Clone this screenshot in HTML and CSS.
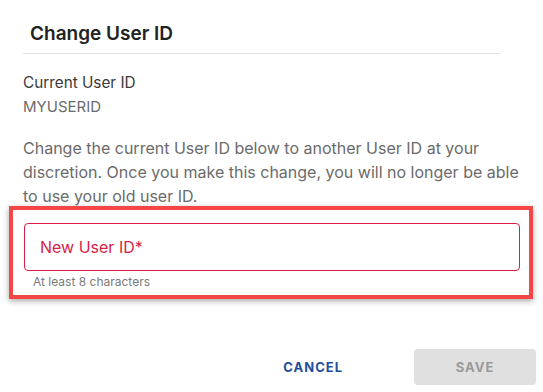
FILE: index.html
```html
<!DOCTYPE html>
<html>
<head>
<meta charset="utf-8">
<link rel="stylesheet" href="styles.css">
</head>
<body>
<div class="dialog">
  <div class="header"><h1 class="title">Change User ID</h1></div>
  <div class="current">
    <div class="current-label">Current User ID</div>
    <div class="current-value">MYUSERID</div>
  </div>
  <p class="desc">Change the current User ID below to another User ID at your discretion. Once you make this change, you will no longer be able to use your old user ID.</p>
  <div class="highlight">
    <div class="field"><span class="field-label">New User ID*</span></div>
    <div class="helper">At least 8 characters</div>
  </div>
  <div class="actions">
    <button class="btn btn-cancel">CANCEL</button>
    <button class="btn btn-save">SAVE</button>
  </div>
</div>
</body>
</html>
```

FILE: styles.css
```css
html, body {
  margin: 0;
  padding: 0;
  background: #fff;
}
body {
  font-family: Inter, "Noto Sans", sans-serif;
  width: 543px;
  height: 392px;
  overflow: hidden;
}
.dialog {
  padding-left: 23px;
  padding-right: 7px;
}
.header {
  width: 477px;
  height: 54px;
  box-sizing: border-box;
  border-bottom: 1px solid #e2e2e2;
  display: flex;
  align-items: center;
  padding-left: 7px;
  padding-top: 14px;
}
.title {
  margin: 0;
  font-size: 19px;
  font-weight: 600;
  color: #222;
  line-height: 24px;
}
.current {
  margin-top: 17px;
}
.current-label {
  font-size: 15.3px;
  line-height: 24px;
  color: #3a3a3a;
}
.current-value {
  font-size: 15px;
  line-height: 24px;
  color: #6b6b6b;
}
.desc {
  margin: 17px 0 0 0;
  font-size: 16px;
  line-height: 24px;
  color: #6b6b6b;
  width: 505px;
}
.highlight {
  margin-top: -2px;
  margin-left: -14px;
  width: 524px;
  box-sizing: border-box;
  border: 4px solid #f44646;
  padding: 13px 9px 5px 11px;
  box-shadow: 0 2px 6px rgba(0, 0, 0, 0.35);
}
.field {
  height: 48px;
  box-sizing: border-box;
  border: 1px solid #d81e44;
  border-radius: 4px;
  display: flex;
  align-items: center;
  padding-left: 15px;
}
.field-label {
  font-size: 16px;
  color: #d81e44;
}
.helper {
  margin-top: 3px;
  padding-left: 9px;
  font-size: 12px;
  line-height: 16px;
  color: #7a7a7a;
}
.actions {
  display: flex;
  justify-content: flex-end;
  align-items: center;
  margin-top: 50px;
  gap: 47px;
}
.btn {
  font-family: Inter, "Noto Sans", sans-serif;
  font-size: 13px;
  font-weight: 700;
  letter-spacing: 1px;
  height: 36px;
  border: none;
  border-radius: 4px;
  padding: 0;
  cursor: pointer;
}
.btn-cancel {
  background: transparent;
  color: #1f4f9c;
  padding: 0 24px;
}
.btn-save {
  background: #e0e0e0;
  color: #9a9a9a;
  width: 122px;
}
```
